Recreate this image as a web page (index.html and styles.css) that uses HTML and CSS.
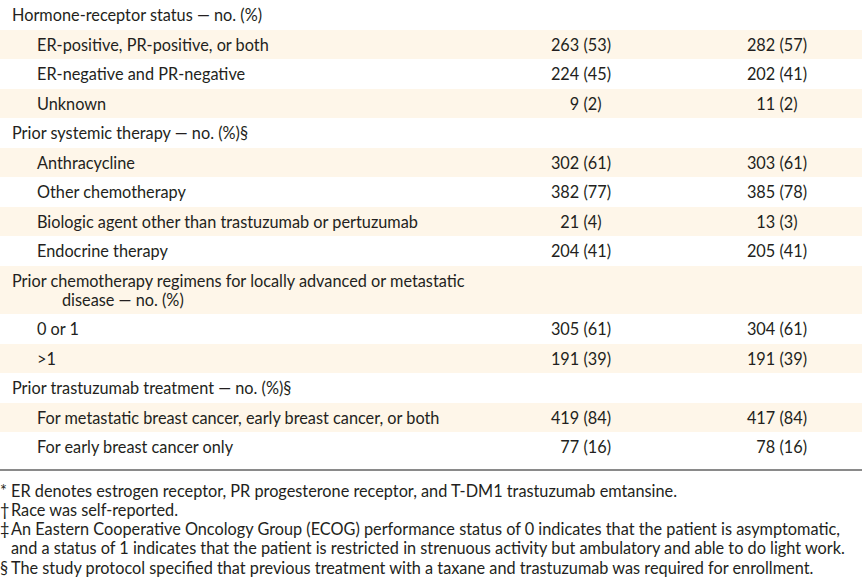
FILE: index.html
```html
<!DOCTYPE html>
<html lang="en">
<head>
<meta charset="utf-8">
<title>Characteristics table</title>
<link rel="stylesheet" href="styles.css">
</head>
<body>
<div class="page">
  <table class="chars">
    <colgroup>
      <col class="c-label">
      <col class="c-a">
      <col class="c-b">
      <col class="c-rest">
    </colgroup>
    <tbody>
      <tr><td class="head">Hormone-receptor status — no. (%)</td><td></td><td></td><td></td></tr>
      <tr class="alt"><td class="sub">ER-positive, PR-positive, or both</td><td class="num">263 (53)</td><td class="num">282 (57)</td><td></td></tr>
      <tr><td class="sub">ER-negative and PR-negative</td><td class="num">224 (45)</td><td class="num">202 (41)</td><td></td></tr>
      <tr class="alt"><td class="sub">Unknown</td><td class="num">9 (2)&#8199;</td><td class="num">11 (2)&#8199;</td><td></td></tr>
      <tr><td class="head">Prior systemic therapy — no. (%)§</td><td></td><td></td><td></td></tr>
      <tr class="alt"><td class="sub">Anthracycline</td><td class="num">302 (61)</td><td class="num">303 (61)</td><td></td></tr>
      <tr><td class="sub">Other chemotherapy</td><td class="num">382 (77)</td><td class="num">385 (78)</td><td></td></tr>
      <tr class="alt"><td class="sub">Biologic agent other than trastuzumab or pertuzumab</td><td class="num">21 (4)&#8199;</td><td class="num">13 (3)&#8199;</td><td></td></tr>
      <tr><td class="sub">Endocrine therapy</td><td class="num">204 (41)</td><td class="num">205 (41)</td><td></td></tr>
      <tr class="alt"><td class="head wrap">Prior chemotherapy regimens for locally advanced or metastatic<br>disease — no. (%)</td><td></td><td></td><td></td></tr>
      <tr><td class="sub">0 or 1</td><td class="num">305 (61)</td><td class="num">304 (61)</td><td></td></tr>
      <tr class="alt"><td class="sub">&gt;1</td><td class="num">191 (39)</td><td class="num">191 (39)</td><td></td></tr>
      <tr><td class="head">Prior trastuzumab treatment — no. (%)§</td><td></td><td></td><td></td></tr>
      <tr class="alt"><td class="sub">For metastatic breast cancer, early breast cancer, or both</td><td class="num">419 (84)</td><td class="num">417 (84)</td><td></td></tr>
      <tr class="last"><td class="sub">For early breast cancer only</td><td class="num">77 (16)</td><td class="num">78 (16)</td><td></td></tr>
    </tbody>
  </table>
  <div class="rule"></div>
  <div class="notes">
    <div class="note"><span class="mark">*</span><span class="txt">ER denotes estrogen receptor, PR progesterone receptor, and T-DM1 trastuzumab emtansine.</span></div>
    <div class="note"><span class="mark">†</span><span class="txt">Race was self-reported.</span></div>
    <div class="note"><span class="mark">‡</span><span class="txt">An Eastern Cooperative Oncology Group (ECOG) performance status of 0 indicates that the patient is asymptomatic,<br>and a status of 1 indicates that the patient is restricted in strenuous activity but ambulatory and able to do light work.</span></div>
    <div class="note"><span class="mark">§</span><span class="txt">The study protocol specified that previous treatment with a taxane and trastuzumab was required for enrollment.</span></div>
  </div>
</div>
</body>
</html>
```

FILE: styles.css
```css
html, body {
  margin: 0;
  padding: 0;
  background: #ffffff;
}

body {
  font-family: Lato, "Open Sans", "DejaVu Sans", sans-serif;
  font-size: 16.3px;
  color: #231f20;
  overflow: hidden;
}

.page {
  width: 862px;
}

.chars {
  width: 862px;
  table-layout: fixed;
  border-collapse: collapse;
  border-spacing: 0;
}

.c-label { width: 470px; }
.c-a { width: 145px; }
.c-b { width: 196px; }
.c-rest { width: 51px; }

.chars td {
  padding: 5.25px 0;
  line-height: 19px;
  vertical-align: middle;
  white-space: nowrap;
}

.chars tr.alt td {
  background: #fef6e9;
}

.chars td.head {
  padding-left: 12px;
}

.chars td.head.wrap {
  padding-left: 62px;
  text-indent: -50px;
}

.chars td.sub {
  padding-left: 37px;
}

.chars td.num {
  text-align: right;
  padding-right: 4px;
}

.rule {
  margin-top: 7px;
  height: 2px;
  background: #8a8a8a;
}

.notes {
  padding-top: 10px;
  font-size: 16.3px;
  line-height: 19.3px;
}

.note {
  display: flex;
  white-space: nowrap;
}

.note .mark {
  width: 11px;
  flex: none;
}
```
